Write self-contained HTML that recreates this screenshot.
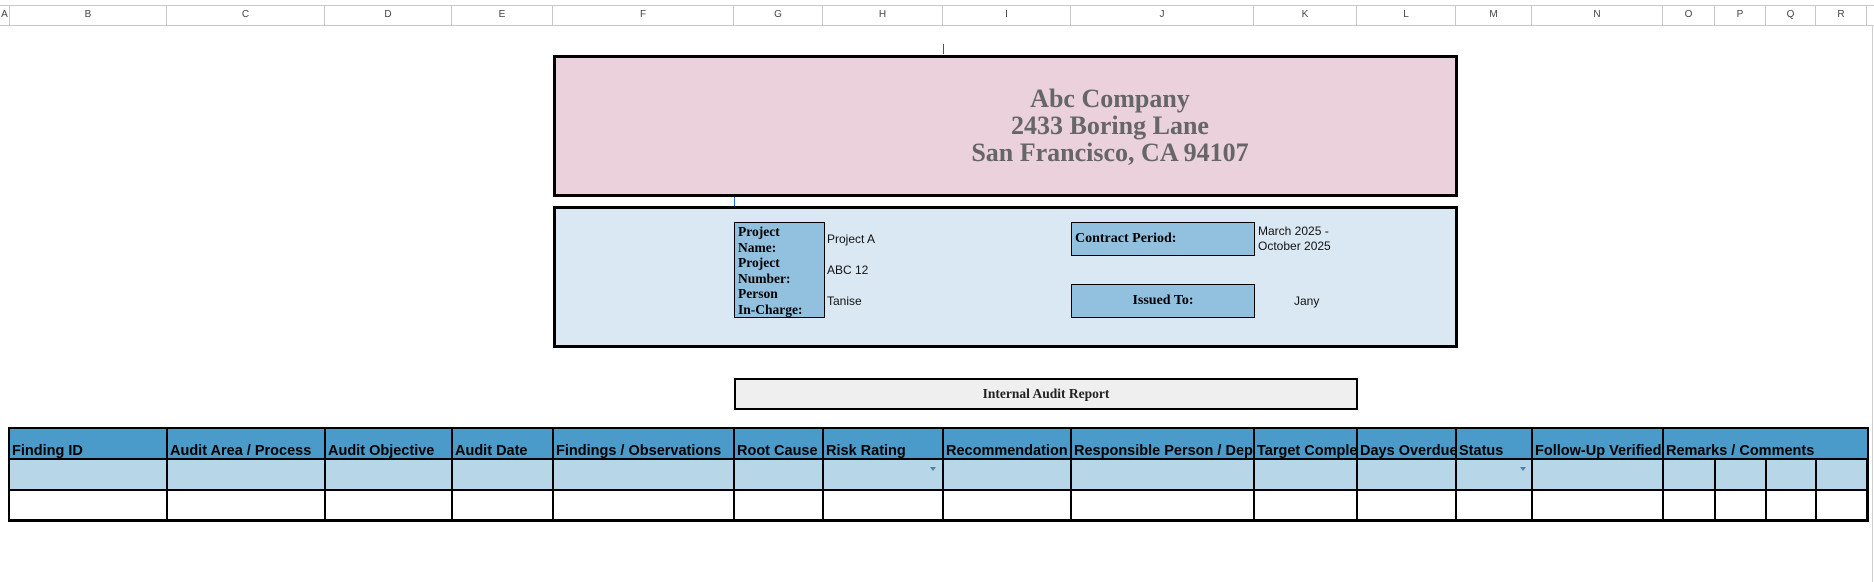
<!DOCTYPE html>
<html><head><meta charset="utf-8"><style>
*{margin:0;padding:0;box-sizing:border-box}
body{width:1874px;height:582px;background:#fff;position:relative;overflow:hidden;font-family:"Liberation Sans",sans-serif}
.a{position:absolute}
.ch{position:absolute;top:5px;height:20px;border-right:1px solid #c8c8c8;font-size:10px;color:#444;text-align:center;line-height:20px}
.hd{position:absolute;background:#4a9bc9;font-weight:bold;font-size:14.5px;color:#000;white-space:nowrap;overflow:hidden;padding-left:2px;line-height:20px;padding-top:12px}
.r2{position:absolute;background:#b7d7e9}
.r3{position:absolute;background:#fff}
.lb{font-family:"Liberation Serif",serif;font-weight:bold;font-size:14px}
.v{font-size:12px;color:#111}
</style></head><body>
<div class="a" style="left:0;top:5px;width:1874px;height:1px;background:#c8c8c8"></div>
<div class="a" style="left:0;top:25px;width:1874px;height:1px;background:#c8c8c8"></div>
<div class="ch" style="left:0;width:10px">A</div>
<div class="ch" style="left:10px;width:157px">B</div>
<div class="ch" style="left:167px;width:158px">C</div>
<div class="ch" style="left:325px;width:127px">D</div>
<div class="ch" style="left:452px;width:101px">E</div>
<div class="ch" style="left:553px;width:181px">F</div>
<div class="ch" style="left:734px;width:89px">G</div>
<div class="ch" style="left:823px;width:120px">H</div>
<div class="ch" style="left:943px;width:128px">I</div>
<div class="ch" style="left:1071px;width:183px">J</div>
<div class="ch" style="left:1254px;width:103px">K</div>
<div class="ch" style="left:1357px;width:99px">L</div>
<div class="ch" style="left:1456px;width:76px">M</div>
<div class="ch" style="left:1532px;width:131px">N</div>
<div class="ch" style="left:1663px;width:52px">O</div>
<div class="ch" style="left:1715px;width:51px">P</div>
<div class="ch" style="left:1766px;width:50px">Q</div>
<div class="ch" style="left:1816px;width:51px">R</div>
<div class="a" style="left:1872px;top:25px;width:1px;height:557px;background:#d0d0d0"></div>

<div class="a" style="left:943px;top:44px;width:1px;height:10px;background:#555"></div>
<div class="a" style="left:734px;top:196px;width:1px;height:11px;background:#1a73e8"></div>

<div class="a" style="left:553px;top:55px;width:905px;height:142px;background:#ead1dc;border:3px solid #000"></div>
<div class="a" style="left:890px;top:85px;width:440px;text-align:center;font-family:'Liberation Serif',serif;font-weight:bold;font-size:26px;line-height:27px;color:#666">Abc Company<br>2433 Boring Lane<br>San Francisco, CA 94107</div>

<div class="a" style="left:553px;top:206px;width:905px;height:142px;background:#d9e8f3;border:3px solid #000"></div>
<div class="a lb" style="left:734px;top:222px;width:91px;height:96px;background:#92c1e0;border:1px solid #000;line-height:15.5px;padding:1px 3px;font-size:13.5px">Project<br>Name:<br>Project<br>Number:<br>Person<br>In-Charge:</div>
<div class="a v" style="left:827px;top:232px">Project A</div>
<div class="a v" style="left:827px;top:263px">ABC 12</div>
<div class="a v" style="left:827px;top:294px">Tanise</div>
<div class="a lb" style="left:1071px;top:222px;width:184px;height:34px;background:#92c1e0;border:1px solid #000;line-height:32px;padding-left:3px">Contract Period:</div>
<div class="a v" style="left:1258px;top:224px;line-height:15px">March 2025 -<br>October 2025</div>
<div class="a lb" style="left:1071px;top:284px;width:184px;height:34px;background:#92c1e0;border:1px solid #000;line-height:32px;text-align:center">Issued To:</div>
<div class="a v" style="left:1294px;top:294px">Jany</div>

<div class="a lb" style="left:734px;top:378px;width:624px;height:32px;background:#efefef;border:2px solid #000;text-align:center;line-height:28px;font-size:13.5px;color:#222">Internal Audit Report</div>

<div class="a" style="left:8px;top:427px;width:1861px;height:95px;background:#000"></div>
<div class="hd" style="left:10px;top:429px;width:156px;height:29px">Finding ID</div>
<div class="hd" style="left:168px;top:429px;width:156px;height:29px">Audit Area / Process</div>
<div class="hd" style="left:326px;top:429px;width:125px;height:29px">Audit Objective</div>
<div class="hd" style="left:453px;top:429px;width:99px;height:29px">Audit Date</div>
<div class="hd" style="left:554px;top:429px;width:179px;height:29px">Findings / Observations</div>
<div class="hd" style="left:735px;top:429px;width:87px;height:29px">Root Cause</div>
<div class="hd" style="left:824px;top:429px;width:118px;height:29px">Risk Rating</div>
<div class="hd" style="left:944px;top:429px;width:126px;height:29px">Recommendation</div>
<div class="hd" style="left:1072px;top:429px;width:181px;height:29px">Responsible Person / Dept</div>
<div class="hd" style="left:1255px;top:429px;width:101px;height:29px">Target Completion</div>
<div class="hd" style="left:1358px;top:429px;width:97px;height:29px">Days Overdue</div>
<div class="hd" style="left:1457px;top:429px;width:74px;height:29px">Status</div>
<div class="hd" style="left:1533px;top:429px;width:129px;height:29px">Follow-Up Verified</div>
<div class="hd" style="left:1664px;top:429px;width:203px;height:29px">Remarks / Comments</div>
<div id="rows"></div>
<script>
var b=[9,167,325,452,553,734,823,943,1071,1254,1357,1456,1532,1663,1715,1766,1816,1867];
var h='';
for(var i=0;i<b.length-1;i++){
 var l=b[i]+1,w=b[i+1]-b[i]-2;
 if(i==0){l=10;w=156;}
 h+='<div class="r2" style="left:'+l+'px;top:460px;width:'+w+'px;height:29px"></div>';
 h+='<div class="r3" style="left:'+l+'px;top:491px;width:'+w+'px;height:28px"></div>';
}
document.getElementById('rows').innerHTML=h;
</script>
<div class="a" style="left:930px;top:467px;width:0;height:0;border-left:3.5px solid transparent;border-right:3.5px solid transparent;border-top:4px solid #4a7fb0"></div>
<div class="a" style="left:1520px;top:467px;width:0;height:0;border-left:3.5px solid transparent;border-right:3.5px solid transparent;border-top:4px solid #4a7fb0"></div>
</body></html>
